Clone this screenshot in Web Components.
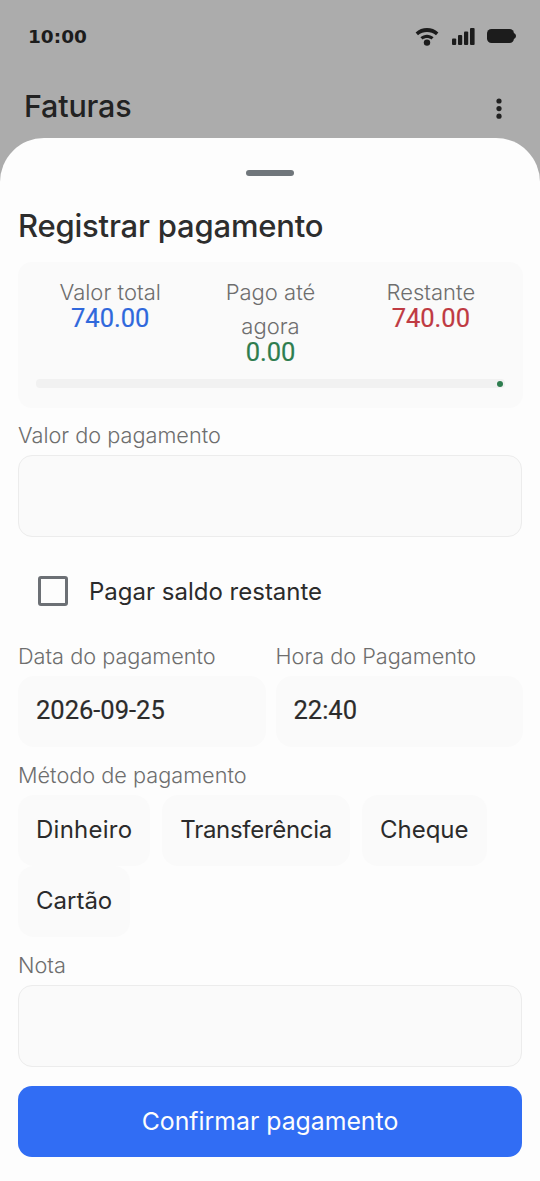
<!DOCTYPE html>
<html lang="pt">
<head>
<meta charset="utf-8">
<title>Faturas</title>
<style>
  html, body { margin: 0; padding: 0; height: 100%; }
  body { width: 540px; height: 1181px; overflow: hidden; background: #acacac; font-family: Inter, "Noto Sans", sans-serif; color: #2b2b2b; }
</style>
</head>
<body>
<x-app></x-app>
<script>
// status bar
class XStatus extends HTMLElement {
  constructor() {
    super();
    this.attachShadow({mode: 'open'}).innerHTML = `
    <style>
      :host { display: flex; align-items: center; justify-content: space-between; height: 24px; padding: 24px 24px 0 28px; }
      .time { font: bold 18.5px "DejaVu Sans", sans-serif; color: #1c1c1c; }
      .icons { display: flex; align-items: center; gap: 12.5px; }
      svg { display: block; fill: #1c1c1c; }
    </style>
    <span class="time">10:00</span>
    <div class="icons">
      <svg width="24" height="20" viewBox="0 0 24 20">
        <path d="M0.6 6.4 C7 0.6 17 0.6 23.4 6.4 L21 9.2 C15.8 4.8 8.2 4.8 3 9.2 Z"/>
        <path d="M5.4 11.2 C9.4 7.8 14.6 7.8 18.6 11.2 L16.4 13.6 C13.8 11.6 10.2 11.6 7.6 13.6 Z"/>
        <circle cx="12" cy="16.6" r="3.2"/>
      </svg>
      <svg width="23" height="17" viewBox="0 0 23 17">
        <rect x="0" y="10.5" width="4.2" height="6.5" rx="1"/>
        <rect x="6" y="7" width="4.2" height="10" rx="1"/>
        <rect x="12" y="3.5" width="4.2" height="13.5" rx="1"/>
        <rect x="18" y="0" width="4.6" height="17" rx="1"/>
      </svg>
      <svg width="29" height="14" viewBox="0 0 29 14">
        <rect x="0" y="0" width="27" height="14" rx="4.5"/>
        <path d="M26 4 C28 4.2 29 5.4 29 7 C29 8.6 28 9.8 26 10 Z"/>
      </svg>
    </div>`;
  }
}
customElements.define('x-status', XStatus);

// app header
class XHeader extends HTMLElement {
  constructor() {
    super();
    this.attachShadow({mode: 'open'}).innerHTML = `
    <style>
      :host { display: flex; align-items: center; justify-content: space-between; box-sizing: border-box; height: 90px; padding: 24px 32px 0 24px; }
      .t { font-size: 30.5px; font-weight: 500; color: #222; letter-spacing: -.2px; }
      svg { display: block; fill: #222; margin-top: 7px; }
    </style>
    <span class="t"><slot></slot></span>
    <svg width="18" height="22" viewBox="0 0 18 22">
      <circle cx="9" cy="3" r="2.6"/><circle cx="9" cy="10.6" r="2.6"/><circle cx="9" cy="18.2" r="2.6"/>
    </svg>`;
  }
}
customElements.define('x-header', XHeader);

// label + coloured amount in the summary card
class XStat extends HTMLElement {
  constructor() {
    super();
    this.attachShadow({mode: 'open'}).innerHTML = `
    <style>
      :host { display: block; flex: 1 1 0; min-width: 0; padding: 0 4px; text-align: center; }
      .l { font-size: 22px; font-weight: 300; line-height: 34px; color: #6e6e6e; }
      .v { font: 400 25.5px/20px Roboto, sans-serif; color: var(--c); height: 20px; margin-top: -1px; -webkit-text-stroke: .2px var(--c); }
    </style>
    <div class="l"><slot></slot></div>
    <div class="v">${this.getAttribute('value')}</div>`;
    this.style.setProperty('--c', this.getAttribute('color'));
  }
}
customElements.define('x-stat', XStat);

class XSummary extends HTMLElement {
  constructor() {
    super();
    this.attachShadow({mode: 'open'}).innerHTML = `
    <style>
      :host { display: block; background: #fafafa; border-radius: 14px; padding: 13px 18px 20px; height: 113px; margin-right: -1px; }
      .row { display: flex; height: 104px; margin: 0 -6px; }
      .bar { height: 9px; border-radius: 4px; background: #f1f1f1; position: relative; }
      .dot { position: absolute; right: 2px; top: 1.5px; width: 6px; height: 6px; border-radius: 50%; background: #2e7d4f; }
    </style>
    <div class="row"><slot></slot></div>
    <div class="bar"><div class="dot"></div></div>`;
  }
}
customElements.define('x-summary', XSummary);

// label with an empty field box under it
class XField extends HTMLElement {
  constructor() {
    super();
    this.attachShadow({mode: 'open'}).innerHTML = `
    <style>
      :host { display: block; }
      .l { font-size: 21.7px; font-weight: 300; line-height: 26px; color: #6e6e6e; height: 26px; margin-bottom: 7px; }
      .box { height: 80px; background: #fafafa; border: 1.5px solid #ececec; border-radius: 14px; }
    </style>
    <div class="l"><slot></slot></div>
    <div class="box"></div>`;
  }
}
customElements.define('x-field', XField);

class XCheck extends HTMLElement {
  constructor() {
    super();
    this.attachShadow({mode: 'open'}).innerHTML = `
    <style>
      :host { display: flex; align-items: center; gap: 21px; padding-left: 20px; height: 30px; }
      .b { box-sizing: border-box; width: 30px; height: 30px; border: 3px solid #6c7075; border-radius: 3px; }
      .t { font-size: 24px; color: #2b2b2b; }
    </style>
    <div class="b"></div>
    <span class="t"><slot></slot></span>`;
  }
}
customElements.define('x-check', XCheck);

// soft grey chip, used for values and payment methods
class XChip extends HTMLElement {
  constructor() {
    super();
    this.attachShadow({mode: 'open'}).innerHTML = `
    <style>
      :host { display: block; box-sizing: border-box; height: 71px; line-height: 69px; padding: 0 18px; background: #fafafa; border-radius: 16px; font-size: 24px; color: #2b2b2b; white-space: nowrap; }
      :host([num]) { font: 25.5px/69px Roboto, sans-serif; -webkit-text-stroke: .2px #2b2b2b; }
    </style>
    <slot></slot>`;
  }
}
customElements.define('x-chip', XChip);

class XSheet extends HTMLElement {
  constructor() {
    super();
    this.attachShadow({mode: 'open'}).innerHTML = `
    <style>
      :host { display: block; box-sizing: border-box; height: 1043px; background: #fdfdfd; border-radius: 44px 44px 0 0; padding: 32px 18px 0; }
      .handle { width: 48px; height: 6px; border-radius: 3px; background: #70767b; margin: 0 auto; }
      h1 { margin: 30px 0 16px; font-size: 31px; line-height: 40px; font-weight: 500; color: #2d2d2d; letter-spacing: -.2px; }
      x-field.a { margin-top: 14px; }
      x-check { margin-top: 39px; }
      .two { display: grid; grid-template-columns: 1fr 1fr; gap: 11px; margin-top: 37px; }
      .lab { font-size: 21.7px; font-weight: 300; line-height: 26px; height: 26px; color: #6e6e6e; margin-bottom: 7px; }
      .two x-chip { margin-right: -1px; }
      .lab.m { margin-top: 15px; margin-bottom: 7px; }
      .chips { display: flex; flex-wrap: wrap; gap: 0 12px; }
      x-field.n { margin-top: 15px; }
      button { display: block; box-sizing: border-box; width: 100%; height: 71px; margin-top: 19px; padding: 0 0 2px; border: 0; border-radius: 14px; background: #316df4; color: #fdfdfd; font: 400 24.8px Inter, sans-serif; }
    </style>
    <div class="handle"></div>
    <h1><slot name="title"></slot></h1>
    <x-summary>
      <x-stat value="740.00" color="#2f68dc">Valor total</x-stat>
      <x-stat value="0.00" color="#2e7d4f">Pago até agora</x-stat>
      <x-stat value="740.00" color="#bf3a42">Restante</x-stat>
    </x-summary>
    <x-field class="a">Valor do pagamento</x-field>
    <x-check>Pagar saldo restante</x-check>
    <div class="two">
      <div><div class="lab">Data do pagamento</div><x-chip num>2026-09-25</x-chip></div>
      <div><div class="lab">Hora do Pagamento</div><x-chip num>22:40</x-chip></div>
    </div>
    <div class="lab m">Método de pagamento</div>
    <div class="chips">
      <x-chip style="letter-spacing:.25px">Dinheiro</x-chip><x-chip style="letter-spacing:-.3px">Transferência</x-chip><x-chip>Cheque</x-chip><x-chip>Cartão</x-chip>
    </div>
    <x-field class="n">Nota</x-field>
    <button>Confirmar pagamento</button>`;
  }
}
customElements.define('x-sheet', XSheet);

class XApp extends HTMLElement {
  constructor() {
    super();
    this.attachShadow({mode: 'open'}).innerHTML = `
    <style>
      :host { display: block; width: 540px; height: 1181px; }
    </style>
    <x-status></x-status>
    <x-header>Faturas</x-header>
    <x-sheet><span slot="title">Registrar pagamento</span></x-sheet>`;
  }
}
customElements.define('x-app', XApp);
</script>
</body>
</html>
